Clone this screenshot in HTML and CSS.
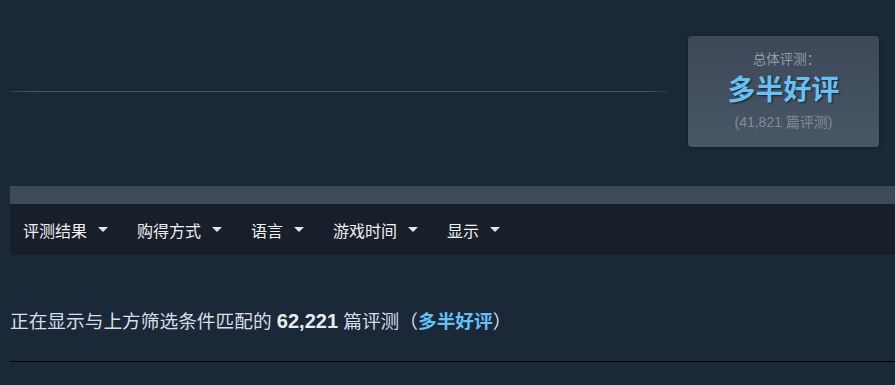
FILE: index.html
```html
<!DOCTYPE html>
<html lang="zh-CN">
<head>
<meta charset="utf-8">
<title>评测</title>
<link rel="stylesheet" href="styles.css">
</head>
<body>
<div class="page">
  <div class="header">
    <div class="header-left">
      <div class="rule"></div>
    </div>
    <div class="summary-box">
      <div class="summary-title">总体评测：</div>
      <div class="summary-rating">多半好评</div>
      <div class="summary-count">(41,821 篇评测)</div>
    </div>
  </div>
  <div class="filters">
    <div class="filters-top"></div>
    <div class="filters-menu">
      <div class="menu-item"><span>评测结果</span><span class="arrow"></span></div>
      <div class="menu-item"><span>购得方式</span><span class="arrow"></span></div>
      <div class="menu-item"><span>语言</span><span class="arrow"></span></div>
      <div class="menu-item"><span>游戏时间</span><span class="arrow"></span></div>
      <div class="menu-item"><span>显示</span><span class="arrow"></span></div>
    </div>
  </div>
  <div class="results-line">正在显示与上方筛选条件匹配的 <b class="num">62,221</b> 篇评测（<b class="rating">多半好评</b>）</div>
  <div class="bottom-rule"></div>
</div>
</body>
</html>
```
FILE: styles.css
```css
html, body {
  margin: 0;
  padding: 0;
  background: #1b2838;
  overflow: hidden;
}
body {
  font-family: "Liberation Sans", "Noto Sans CJK SC", sans-serif;
  color: #c6d4df;
}
.page {
  padding-left: 10px;
}
.header {
  display: flex;
  align-items: flex-start;
}
.header-left {
  flex: 0 0 657px;
  padding-top: 91px;
}
.rule {
  height: 1px;
  background: linear-gradient(to right, #2e3a49 0%, #4d5a6b 4%, #4d5a6b 96%, #2e3a49 100%);
}
.summary-box {
  margin-left: 21px;
  margin-top: 36px;
  width: 191px;
  height: 111px;
  border-radius: 4px;
  background: linear-gradient(to bottom, #3c4857 0%, #4a5766 100%);
  box-shadow: 0 0 4px rgba(0, 0, 0, 0.35);
  display: flex;
  flex-direction: column;
  align-items: center;
  box-sizing: border-box;
  padding-top: 15px;
}
.summary-title {
  font-size: 13.5px;
  line-height: 18px;
  color: #939ba3;
  padding-left: 6px;
}
.summary-rating {
  font-size: 28px;
  line-height: 36px;
  font-weight: bold;
  color: #66c0f4;
  text-shadow: 1px 1px 2px rgba(0, 0, 0, 0.6);
  margin-top: 4px;
}
.summary-count {
  font-size: 14px;
  line-height: 18px;
  color: #808c99;
  margin-top: 4px;
}
.filters {
  margin-top: 39px;
}
.filters-top {
  height: 18px;
  background: #3d4a5a;
}
.filters-menu {
  height: 51px;
  background: #171f2b;
  display: flex;
  align-items: center;
  padding-left: 13px;
  gap: 29px;
}
.menu-item {
  display: flex;
  align-items: center;
  gap: 11px;
  font-size: 16px;
  color: #f0f0f0;
}
.arrow {
  width: 0;
  height: 0;
  border-left: 5px solid transparent;
  border-right: 5px solid transparent;
  border-top: 5px solid #e5e5e5;
  margin-top: -1px;
}
.results-line {
  margin-top: 54px;
  font-size: 18.7px;
  line-height: 24px;
  color: #d6dfe6;
}
.num {
  font-size: 20px;
  color: #e6edf2;
}
.rating {
  color: #66c0f4;
}
.bottom-rule {
  margin-top: 27px;
  height: 1px;
  background: #000;
}
```
